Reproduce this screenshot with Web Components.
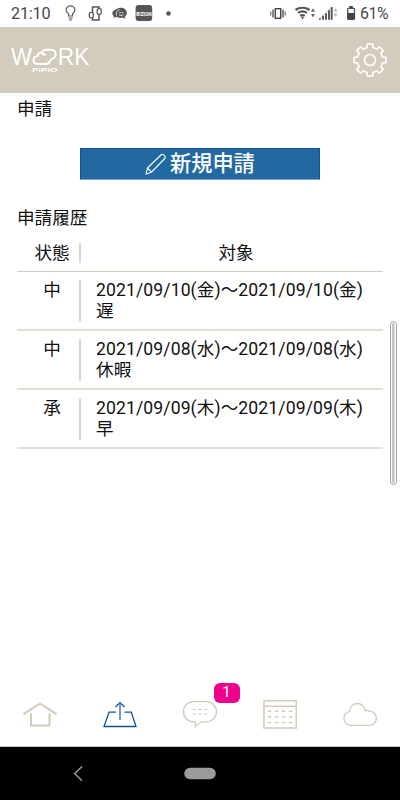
<!DOCTYPE html>
<html lang="ja">
<head>
<meta charset="utf-8">
<title>申請</title>
<style>
html,body{margin:0;height:100%;background:#fff;overflow:hidden}
body{font-family:Roboto,"Noto Sans CJK JP",sans-serif;color:#111}
</style>
</head>
<body>
<work-app></work-app>
<script>
function define(name, css, html){
  customElements.define(name, class extends HTMLElement{
    constructor(){
      super();
      this.attachShadow({mode:'open'}).innerHTML =
        `<style>*{box-sizing:border-box}svg{display:block;overflow:visible}${css}</style>${html}`;
    }
  });
}

function gearPath(cx, cy){
  const pts=[];
  for(let k=0;k<8;k++){
    const a=k*Math.PI/4, c=Math.cos(a), s=Math.sin(a);
    for(const [r,t] of [[12.6,-2.8],[16,-2.8],[16,2.8],[12.6,2.8]])
      pts.push((cx+r*c-t*s).toFixed(2)+' '+(cy+r*s+t*c).toFixed(2));
  }
  return 'M'+pts.join('L')+'Z';
}

define('status-bar', `
:host{display:flex;height:27px;background:#fff;color:#484848;justify-content:space-between}
`, `
<svg width="200" height="27" fill="none" stroke="#555" stroke-width="1.1">
<text x="11" y="19.200" font-size="16.200" textLength="39.500" fill="#484848" stroke="none">21:10</text>
<path d="M68.600 16v-2c-2.600-2.200-3-4.700-1.600-6.600c1.600-2 5.400-2 7 0c1.400 1.900 1 4.400-1.500 6.600v2zM68.600 18h4M69 20h3"/>
<path d="M92.500 12.500V7h6.500v1.500M92.500 18v2h6.500v-5.500" stroke-width="1.500"/><rect x="89.300" y="12.300" width="4" height="5.600" rx="1.600" stroke-width="1.300"/><rect x="97.200" y="8.600" width="4" height="5.800" rx="1.600" stroke-width="1.300"/>
<path d="M113 17.800c1.200-.5 1.300-1 .8-1.700c-2.500-2-1.600-5.700 2-6.600c5-3.500 11-1 11 3.200c0 2-1 3.200-2 4l.7 2l-3-1.100c-2 .6-4.300 .4-6-.8c-1.400 .8-2.400 1-3.500 1z" fill="#555" stroke="none"/>
<path d="M116.500 15.500c-1-2.500 .5-4.800 3-5.800M119.300 12.500h1.500m1 0h1.500M119 14.600c1.500 1.200 3 1 4.400-.2" stroke="#fff" stroke-width=".9"/>
<rect x="135.600" y="5" width="16.600" height="16" rx="3" fill="#555" stroke="none"/>
<text x="136.200" y="15.500" font-size="6" font-weight="700" textLength="15.400" lengthAdjust="spacingAndGlyphs" fill="#fff" stroke="none">BIZION</text>
<circle cx="168.500" cy="13.500" r="2.300" fill="#555" stroke="none"/>
</svg>
<svg width="200" height="27" fill="none" stroke="#555">
<rect x="75.300" y="8.700" width="5.400" height="9.600" stroke-width="1.400" stroke="#444"/>
<path d="M73 9.500v8M83 9.500v8" stroke-width="1.400"/><path d="M70.800 11.500v4M85.200 11.500v4" stroke-width="1"/>
<g stroke-width="2.200"><path d="M95.500 10c4-3 10-3 14 0M98 12.900c3-2 6-2 9 0M100.200 15.800c1.500-1 3-1 4.600 0"/></g><path d="M101 16.800h3L102.500 19.800z" fill="#555" stroke="none"/>
<path d="M111 11.800l2-3.500l2 3.500zM111 14l2 3.500l2-3.500z" fill="#666" stroke="none"/>
<path d="M120 19.800v-1.500M123 19.800v-4M126 19.800v-6.500M129 19.800v-9.500M131.700 19.800V7" stroke-width="1.900"/><path d="M121 17.500L132 7" stroke="#888" stroke-width=".5"/>
<path d="M133.500 11.600l2-3.500l2 3.500zM133.500 13.500l2 3.500l2-3.500z" fill="#bbb" stroke="none"/>
<rect x="147.700" y="8.300" width="6.800" height="11" rx=".8" stroke-width="1.300"/><path d="M147.500 13h7.200v6.500h-7.200zM149.300 6h3.500v2h-3.500z" fill="#444" stroke="none"/>
<text x="160" y="19.300" font-size="15.800" textLength="28.500" fill="#484848" stroke="none">61%</text>
</svg>`);

define('app-header', `
:host{display:flex;height:66px;background:#d3cbbb;justify-content:space-between}
svg{font-family:"Liberation Sans",sans-serif}
`, `
<svg width="110" height="66" fill="#fff">
<text x="11" y="38" font-size="23" textLength="21" lengthAdjust="spacingAndGlyphs">W</text>
<text x="57.800" y="38" font-size="23" textLength="31.500" lengthAdjust="spacingAndGlyphs">RK</text>
<path d="M46 27.700h-1.500c-1.500 0-2.200-.8-2.200-2c-2-.7-4.600 .5-4.500 3.300c-5.800 .2-5.800 8 0 8h8.200c3.200 0 3.600-2.400 4.800-4.200c.8-1.200 2-1 3.300-2.100c3-2.800 1.400-8-2.600-8h-5.200c-2.200 0-3.600 1.200-4 3" fill="none" stroke="#fff" stroke-width="2"/>
<text x="32" y="45" font-size="6" font-weight="700" textLength="25.500" lengthAdjust="spacingAndGlyphs">PiPiO</text>
</svg>
<svg width="60" height="66" fill="none" stroke="#fff" stroke-width="1.600" stroke-linejoin="round"><path d="${gearPath(30,33)}"/><circle cx="30" cy="33" r="5.500"/></svg>`);

define('new-button', `
:host{display:flex;width:240px;height:32px;background:#2269a2;color:#fff;align-items:center;justify-content:flex-start;padding-left:64px;border:1px solid #14539a;border-bottom-color:#7ea3cb;font-size:21.200px;font-weight:500;line-height:30px}
svg{flex:none;margin-right:3px}
`, `<svg width="22" height="22" fill="none" stroke="#fff" stroke-width="1.100" stroke-linejoin="round"><path d="M1 21l1.500-6L16.500 1.500c1-1 4.500 2.200 3.700 3.500L6.500 19.200zM2.500 15l4 4.200"/></svg><slot></slot>`);

define('history-row', `
:host{display:flex;height:59px;border-bottom:2px solid #e3ded4;font-size:17.600px;line-height:21px;padding:8px 0 7px}
:host([head]){height:35px;padding:6px 0 8px;border-bottom:1px solid #d3cbbb}
.s{width:62px;padding-left:8px;text-align:center;flex:none}
.d{width:2px;background:#ddd8ce}
.t{flex:1;padding-left:15px;letter-spacing:.1px}
:host([head]) .t{text-align:center;padding:0 0 0 8px;letter-spacing:0}
`, `<div class="s"><slot name="state"></slot></div><div class="d"></div><div class="t"><slot></slot></div>`);

define('scroll-thumb', `:host{position:absolute;left:390px;top:321px;width:7px;height:164px;border:1px solid #a2a2a2;border-radius:4px;background:linear-gradient(90deg,#fff 0 1px,#c3c3c3 1px 3px,#ddd 3px);box-shadow:inset 0 0 0 1px #fff}`, '');

define('tab-item', `:host{display:flex;flex:1;position:relative;height:64px}
.b{position:absolute;left:53.500px;top:0;width:26px;height:20px;border-radius:6px;background:#ec008c;color:#fff;font-size:15px;line-height:19px;text-align:center}
:host(:not([badge])) .b{display:none}`, `<slot></slot><span class="b"><slot name="badge"></slot></span>`);

define('tab-bar', `:host{display:flex;height:64px;border-bottom:1px solid #ccc}
svg{fill:none;stroke:#d3cbbb;stroke-width:1.500}`, `
<tab-item><svg width="80" height="64" stroke-linecap="round"><path d="M24 30.800L40 20.500L56 30.800M31 31v11.500h18.500V31" style="stroke-width:2"/></svg></tab-item>
<tab-item><svg width="80" height="64"><path d="M36 29.200h-7L24 43.500h32L51.300 29.200H44.500M35.500 24L40 19.600L44.500 24" style="stroke:#13539b;stroke-width:1.300"/><path d="M40 20v17" style="stroke:#427eb4"/></svg></tab-item>
<tab-item badge><svg width="80" height="64"><path d="M35.500 38.800H34c-6 0-10.500-4.300-10.500-10.200S28 18.600 34 18.600h12c6 0 10.500 4.200 10.500 10s-4.500 10.200-10.500 10.200h-4.500l-6.300 4.700z" style="stroke-width:1.300"/><path d="M32.500 26.500h3m3 0h3m3 0h3M32.500 31.200h3m3 0h3m3 0h3" style="stroke-width:1.200"/></svg><span slot="badge">1</span></tab-item>
<tab-item><svg width="80" height="64"><path d="M24 17.800h32.300v27.300H24zM24 23.200h32.300"/><path d="M27.800 28.200h3.500m3.500 0h3.500m3.500 0h3.500m3.500 0h3.500M27.800 33.900h3.500m3.500 0h3.500m3.500 0h3.500m3.500 0h3.500M27.800 39.500h3.500m3.500 0h3.500m3.500 0h3.500m3.500 0h3.500"/></svg></tab-item>
<tab-item><svg width="80" height="64"><path d="M31 42.400c-4 0-7-3-7-6.800c0-3.700 2.300-6.500 5.600-6.900c-.2-4.500 3.100-8.200 7.700-8.200c4.300 0 7.500 3.200 7.800 7.200c6.300-.8 11.200 2.500 11.200 7.700c0 4-3 7-7 7z" style="stroke-width:1.300"/></svg></tab-item>`);

define('nav-bar', `:host{display:flex;height:53px;background:#000}`, `
<svg width="400" height="53" fill="none"><path d="M82 19.500L74.700 26.500L82 33.700" stroke="#999" stroke-width="1.500"/><rect x="184.300" y="20.700" width="31.500" height="11.500" rx="5.750" fill="#9a9a9a"/></svg>`);

define('work-app', `:host{display:flex;flex-direction:column;width:400px;height:800px;position:relative}
main{flex:1;padding:5px 17px 0}
h1,h2{margin:0;font-size:17.600px;font-weight:400;line-height:22px}
new-button{margin:28px auto 27px}
history-row[head]{margin-top:8px}`, `
<status-bar></status-bar><app-header></app-header>
<main><h1>申請</h1><new-button>新規申請</new-button><h2>申請履歴</h2>
<history-row head><span slot="state">状態</span>対象</history-row>
<history-row><span slot="state">中</span>2021/09/10(金)～2021/09/10(金)<br>遅</history-row>
<history-row><span slot="state">中</span>2021/09/08(水)～2021/09/08(水)<br>休暇</history-row>
<history-row><span slot="state">承</span>2021/09/09(木)～2021/09/09(木)<br>早</history-row>
</main>
<tab-bar></tab-bar><nav-bar></nav-bar><scroll-thumb></scroll-thumb>`);
</script>
</body>
</html>
